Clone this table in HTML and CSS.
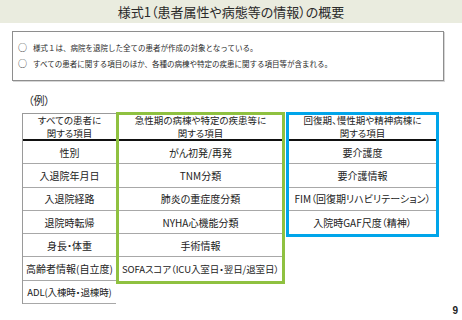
FILE: index.html
```html
<!DOCTYPE html>
<html lang="ja">
<head>
<meta charset="utf-8">
<link rel="stylesheet" href="styles.css">
</head>
<body>
<div class="page">
  <header class="titlebar">様式1（患者属性や病態等の情報）の概要</header>
  <section class="info">
    <div class="bullet"><span class="mark">○</span><span>様式１は、病院を退院した全ての患者が作成の対象となっている。</span></div>
    <div class="bullet"><span class="mark">○</span><span>すべての患者に関する項目のほか、各種の病棟や特定の疾患に関する項目等が含まれる。</span></div>
  </section>
  <div class="example">（例）</div>
  <div class="table">
    <div class="col col-all">
      <div class="head">すべての患者に<br>関する項目</div>
      <div class="cell">性別</div>
      <div class="cell">入退院年月日</div>
      <div class="cell">入退院経路</div>
      <div class="cell">退院時転帰</div>
      <div class="cell">身長・体重</div>
      <div class="cell">高齢者情報(自立度)</div>
      <div class="cell narrow">ADL(入棟時・退棟時)</div>
    </div>
    <div class="col col-acute">
      <div class="head">急性期の病棟や特定の疾患等に<br>関する項目</div>
      <div class="cell">がん初発/再発</div>
      <div class="cell">TNM分類</div>
      <div class="cell">肺炎の重症度分類</div>
      <div class="cell">NYHA心機能分類</div>
      <div class="cell">手術情報</div>
      <div class="cell narrow">SOFAスコア（ICU入室日・翌日/退室日）</div>
    </div>
    <div class="col col-chronic">
      <div class="head">回復期、慢性期や精神病棟に<br>関する項目</div>
      <div class="cell">要介護度</div>
      <div class="cell">要介護情報</div>
      <div class="cell">FIM（回復期リハビリテーション）</div>
      <div class="cell">入院時GAF尺度（精神）</div>
    </div>
  </div>
  <footer class="pageno">9</footer>
</div>
</body>
</html>
```

FILE: styles.css
```css
html, body {
  margin: 0;
  padding: 0;
  background: #ffffff;
}

body {
  font-family: "Noto Sans CJK JP", "Noto Sans", "Liberation Sans", sans-serif;
  color: #222222;
}

.page {
  width: 462px;
  height: 320px;
  display: flex;
  flex-direction: column;
  overflow: hidden;
}

.titlebar {
  height: 23px;
  line-height: 23px;
  background: #eaecdf;
  text-align: center;
  font-size: 13px;
  color: #2a2a2a;
  font-feature-settings: "palt";
  flex: none;
}

.info {
  margin: 8px 0 0 12px;
  width: 432px;
  box-sizing: border-box;
  border: 1px solid #8e8e8e;
  box-shadow: 1px 1px 0 #d6d6d6;
  padding: 8px 0 8px 5px;
  flex: none;
}

.bullet {
  display: flex;
  align-items: center;
  font-size: 7.5px;
  line-height: 16px;
  height: 16px;
  color: #2a2a2a;
}

.mark {
  width: 15px;
  flex: none;
  font-size: 9px;
}

.example {
  margin: 12px 0 0 28px;
  font-size: 11px;
  line-height: 14px;
  height: 14px;
  color: #2a2a2a;
  font-feature-settings: "palt";
  flex: none;
}

.table {
  display: flex;
  align-items: flex-start;
  margin: 5px 0 0 22px;
  font-feature-settings: "palt";
  flex: none;
}

.col {
  box-sizing: border-box;
  display: flex;
  flex-direction: column;
}

.col-all {
  width: 94px;
  margin-top: 1px;
  border: 1px solid #9a9a9a;
  border-right: none;
  border-bottom: none;
}

.col-acute {
  width: 169px;
  border: 3px solid #8fc140;
}

.col-chronic {
  width: 153px;
  margin-left: 1px;
  border: 3px solid #00a5ea;
}

.head {
  box-sizing: border-box;
  border-bottom: 2px solid #111111;
  display: flex;
  align-items: center;
  justify-content: center;
  text-align: center;
  font-size: 9.5px;
  line-height: 13px;
}

.col-all .head {
  height: 27px;
}

.col-acute .head,
.col-chronic .head {
  height: 26px;
}

.cell {
  box-sizing: border-box;
  height: 23.3px;
  border-bottom: 1px solid #a8a8a8;
  display: flex;
  align-items: center;
  justify-content: center;
  font-size: 10px;
  white-space: nowrap;
}

.narrow {
  font-size: 9.5px;
  letter-spacing: -0.1px;
}

.col-acute .cell:last-child,
.col-chronic .cell:last-child {
  border-bottom: none;
}

.pageno {
  margin-top: auto;
  align-self: flex-end;
  padding: 0 4px 3px 0;
  font-size: 10px;
  line-height: 14px;
  font-weight: bold;
  color: #222222;
  font-family: "Liberation Sans", sans-serif;
}
```
